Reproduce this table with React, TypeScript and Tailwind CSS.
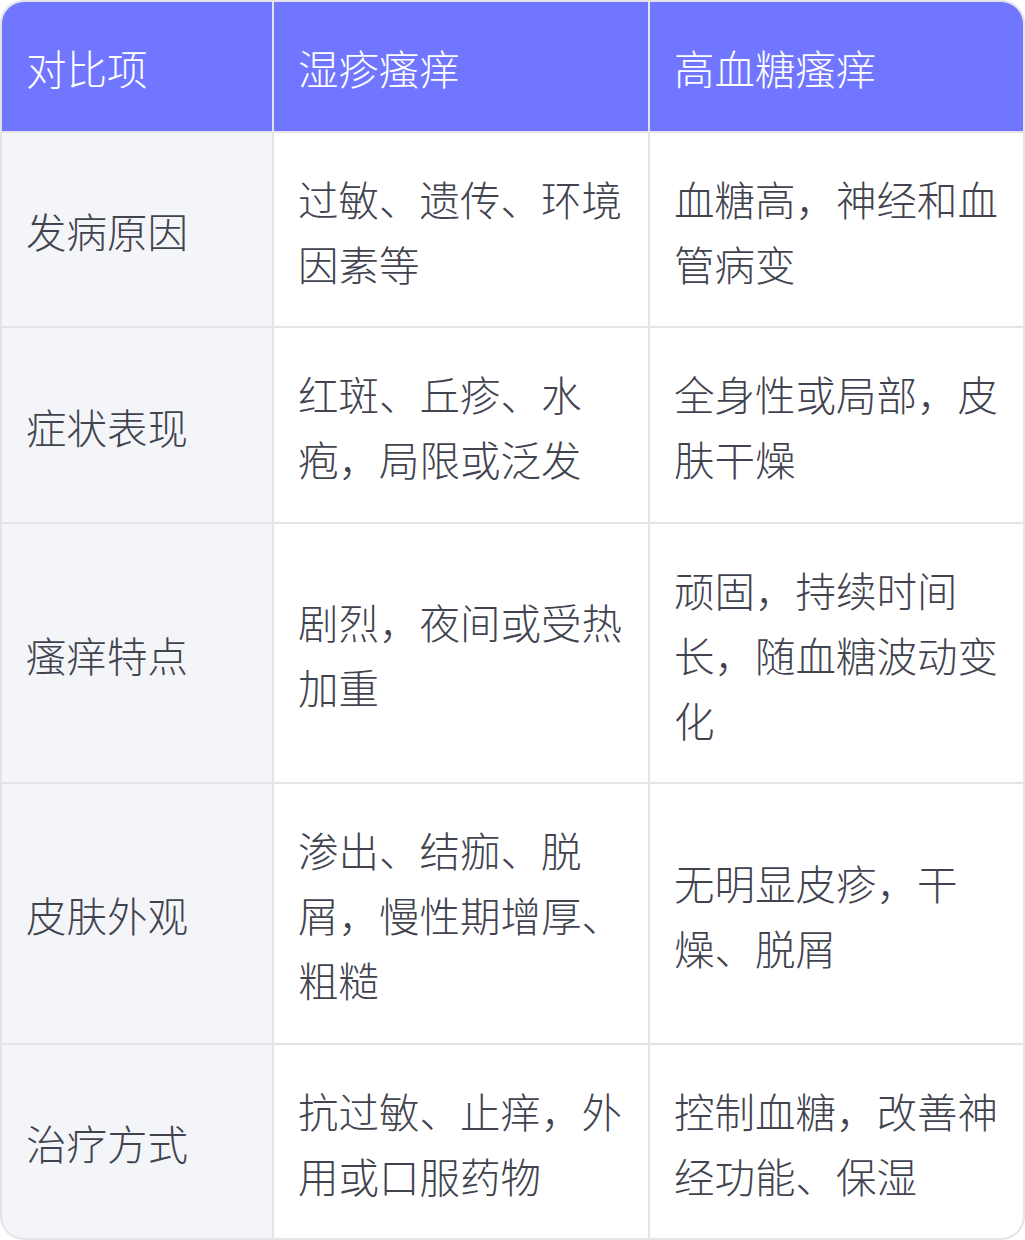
const rows = [
  ["发病原因", "过敏、遗传、环境因素等", "血糖高，神经和血管病变"],
  ["症状表现", "红斑、丘疹、水疱，局限或泛发", "全身性或局部，皮肤干燥"],
  ["瘙痒特点", "剧烈，夜间或受热加重", "顽固，持续时间长，随血糖波动变化"],
  ["皮肤外观", "渗出、结痂、脱屑，慢性期增厚、粗糙", "无明显皮疹，干燥、脱屑"],
  ["治疗方式", "抗过敏、止痒，外用或口服药物", "控制血糖，改善神经功能、保湿"],
]

export default function App() {
  return (
    <div className="w-[1025px] bg-white font-['Noto_Sans_CJK_SC','Noto_Sans',sans-serif]">
      <div className="grid grid-cols-[270px_374px_373px] gap-[2px] overflow-hidden rounded-3xl border-2 border-[#e3e4ea] bg-[#e3e4ea] text-[40.5px] font-light leading-[64.8px]">
        {["对比项", "湿疹瘙痒", "高血糖瘙痒"].map((h) => (
          <div key={h} className="bg-[#7076ff] px-6 pt-[34px] pb-[30px] text-white">
            {h}
          </div>
        ))}
        {rows.map((r) =>
          r.map((c, i) => (
            <div
              key={r[0] + i}
              className={`flex items-center px-6 pt-[34px] pb-[30px] text-[#41434f] ${
                i === 0 ? "bg-[#f4f5f9]" : "bg-white"
              }`}
            >
              <span>{c}</span>
            </div>
          ))
        )}
      </div>
    </div>
  )
}
